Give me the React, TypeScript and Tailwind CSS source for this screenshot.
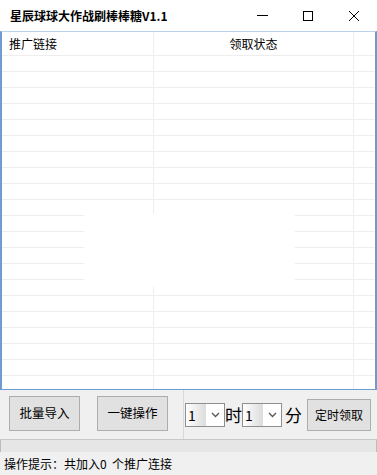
import React from 'react';

const font = { fontFamily: '"Noto Sans CJK SC", "Microsoft YaHei", sans-serif' };

function Row({ header }: { header?: boolean }) {
  return (
    <div className={`flex ${header ? 'h-[24px]' : 'h-[16px]'} border-b border-[#eeeeee]`}>
      <div className="w-[152px] border-r border-[#eeeeee] flex items-center pl-[7px]">
        {header && <span className="text-[12px] text-black">推广链接</span>}
      </div>
      <div className="w-[200px] border-r border-[#eeeeee] flex items-center justify-center">
        {header && <span className="text-[12px] text-black">领取状态</span>}
      </div>
      <div className="flex-1" />
    </div>
  );
}

function Select() {
  return (
    <div className="flex items-center w-[40px] h-[24px] border border-[#8f8f8f] bg-white">
      <div className="w-[20px] h-full flex items-center pl-[2px] text-[14px] leading-none bg-gradient-to-r from-white to-[#dcdcdc]">1</div>
      <svg className="ml-[5px]" width="9" height="6" viewBox="0 0 9 6">
        <path d="M1 1 L4.5 4.5 L8 1" stroke="#555" strokeWidth="1.3" fill="none" />
      </svg>
    </div>
  );
}

export default function App() {
  return (
    <div className="relative w-[377px] h-[475px] bg-white overflow-hidden" style={font}>
      {/* Title bar */}
      <div className="h-[31px] flex items-center">
        <span className="pl-[10px] text-[12px] font-bold text-black">星辰球球大作战刷棒棒糖V1.1</span>
        <div className="ml-auto flex items-center h-full">
          <div className="w-[46px] h-full flex items-center justify-center">
            <div className="w-[11px] h-[1px] bg-black" />
          </div>
          <div className="w-[46px] h-full flex items-center justify-center">
            <div className="w-[10px] h-[10px] border border-black" />
          </div>
          <div className="w-[46px] h-full flex items-center justify-center">
            <svg width="12" height="12" viewBox="0 0 12 12">
              <path d="M1 1 L11 11 M11 1 L1 11" stroke="#000" strokeWidth="1" />
            </svg>
          </div>
        </div>
      </div>

      {/* List */}
      <div className="h-[359px] border-t border-[#b9d1ea] border-l-2 border-r-2 border-l-[#6f9bd1] border-r-[#6f9bd1] border-b border-b-[#6f9bd1] overflow-hidden">
        <Row header />
        {Array.from({ length: 21 }).map((_, i) => (
          <Row key={i} />
        ))}
      </div>
      <div className="absolute left-[84px] top-[214px] w-[211px] h-[73px] bg-white" />

      {/* Bottom panel */}
      <div className="h-[50px] bg-[#f0f0f0] flex border-b border-[#c8c8c8]">
        <div className="w-[184px] border-r border-[#d9d9d9] flex items-start pt-[6px] gap-[17px] pl-[9px]">
          <button className="w-[71px] h-[35px] border border-[#adadad] bg-[#e1e1e1] text-[12.5px] text-black">批量导入</button>
          <button className="w-[71px] h-[35px] border border-[#adadad] bg-[#e1e1e1] text-[12.5px] text-black">一键操作</button>
        </div>
        <div className="flex-1 flex items-center pl-[1px]">
          <Select />
          <span className="text-[17px] leading-none text-black">时</span>
          <Select />
          <span className="ml-[3px] text-[17px] leading-none text-black">分</span>
          <button className="ml-[5px] w-[64px] h-[32px] border border-[#adadad] bg-[#e1e1e1] text-[12px] text-black">定时领取</button>
        </div>
      </div>
      <div className="h-[12px] bg-[#e6e6e6] border-x border-[#bcbcbc]" />
      <div className="h-[23px] flex items-center pl-[4px] text-[12px] text-black bg-[#f0f0f0]">
        操作提示：共加入0&nbsp;&nbsp;个推广连接
      </div>
    </div>
  );
}
